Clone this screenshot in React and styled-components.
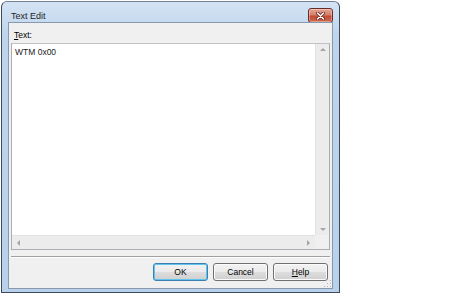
import React from "react"
import styled, { createGlobalStyle } from "styled-components"

const Global = createGlobalStyle`
  html, body {
    margin: 0;
    padding: 0;
    background: #ffffff;
  }
  body {
    font-family: "Liberation Sans", Arial, sans-serif;
    font-size: 8.5px;
    color: #000;
  }
`

const Page = styled.div`
  padding: 1px 0 0 1px;
`

const Window = styled.div`
  width: 337px;
  height: 290px;
  border: 1px solid #3b4b5c;
  border-top-color: #6f8296;
  border-radius: 6px 6px 0 0;
  background: linear-gradient(180deg, #d4e3f4 0%, #bed4ec 12%, #b9d1ea 100%);
  display: flex;
  flex-direction: column;
  box-sizing: content-box;
`

const TitleBar = styled.div`
  height: 20px;
  display: flex;
  align-items: flex-start;
  justify-content: space-between;
  padding: 0 6px 0 9px;
`

const Title = styled.span`
  font-size: 9px;
  line-height: 13px;
  margin-top: 8px;
  color: #1e1e1e;
`

const CloseButton = styled.div`
  width: 23px;
  height: 13px;
  margin-top: 6px;
  border: 1px solid #6b2a24;
  border-radius: 3px;
  background: linear-gradient(180deg, #e8a493 0%, #d47f6b 45%, #c04a35 55%, #cf6a50 100%);
  display: flex;
  align-items: center;
  justify-content: center;
  box-shadow: inset 0 0 0 1px rgba(255, 255, 255, 0.35);
`

const Client = styled.div`
  flex: 1;
  margin: 0 6px 3px 6px;
  border: 1px solid #8699ad;
  background: #f0f0f0;
  display: flex;
  flex-direction: column;
  padding: 0 2px 2px 2px;
  position: relative;
`

const Label = styled.div`
  padding: 6px 0 0 3px;
  height: 14px;
  line-height: 12px;
  u {
    text-decoration: underline;
  }
`

const TextBox = styled.div`
  height: 205px;
  border: 1px solid #abadb3;
  border-top-color: #c0c2c8;
  background: #fff;
  display: grid;
  grid-template-columns: 1fr 14px;
  grid-template-rows: 1fr 14px;
  margin-right: 0;
`

const Content = styled.div`
  padding: 2px 3px;
  line-height: 12px;
  color: #222;
`

const VScroll = styled.div`
  background: #ececec;
  border-left: 1px solid #e2e2e2;
  display: flex;
  flex-direction: column;
  justify-content: space-between;
  align-items: center;
  padding: 4px 0;
`

const HScroll = styled.div`
  background: #ececec;
  border-top: 1px solid #e2e2e2;
  display: flex;
  justify-content: space-between;
  align-items: center;
  padding: 0 5px;
`

const Corner = styled.div`
  background: #f0f0f0;
`

const Separator = styled.div`
  margin-top: 6px;
  height: 0;
  border-top: 1px solid #a0a0a0;
  border-bottom: 1px solid #ffffff;
`

const Buttons = styled.div`
  display: flex;
  justify-content: flex-end;
  gap: 5px;
  padding: 5px 2px 0 0;
`

const Button = styled.button`
  width: 55px;
  height: 18px;
  font-family: "Liberation Sans", Arial, sans-serif;
  font-size: 8.5px;
  color: #000;
  border-radius: 3px;
  border: 1px solid ${p => (p.focused ? "#3c7fb1" : "#707070")};
  background: linear-gradient(180deg, #f2f2f2 0%, #ebebeb 48%, #dddddd 52%, #cfcfcf 100%);
  box-shadow: inset 0 0 0 1px ${p => (p.focused ? "#5fc4f0" : "#fbfbfb")};
  padding: 0;
  u {
    text-decoration: underline;
  }
`

const Grip = styled.div`
  position: absolute;
  right: 1px;
  bottom: 1px;
  width: 8px;
  height: 8px;
  background-image: radial-gradient(circle, #b8b8b8 0.8px, transparent 1px);
  background-size: 3px 3px;
  clip-path: polygon(100% 0, 100% 100%, 0 100%);
`

const Arrow = ({ dir }) => {
  const pts = {
    up: "0,3 3,0 6,3",
    down: "0,0 3,3 6,0",
    left: "3,0 0,3 3,6",
    right: "0,0 3,3 0,6",
  }[dir]
  const vertical = dir === "up" || dir === "down"
  return (
    <svg width={vertical ? 6 : 3} height={vertical ? 3 : 6} viewBox={vertical ? "0 0 6 3" : "0 0 3 6"}>
      <polygon points={pts} fill="#a4a4a4" />
    </svg>
  )
}

export default function App() {
  return (
    <Page>
      <Global />
      <Window>
        <TitleBar>
          <Title>Text Edit</Title>
          <CloseButton>
            <svg width="9" height="8" viewBox="0 0 9 8">
              <path d="M1.5 1 L7.5 7 M7.5 1 L1.5 7" stroke="#5a1d15" strokeWidth="3" strokeLinecap="round" />
              <path d="M1.5 1 L7.5 7 M7.5 1 L1.5 7" stroke="#ffffff" strokeWidth="1.6" strokeLinecap="round" />
            </svg>
          </CloseButton>
        </TitleBar>
        <Client>
          <Label>
            <u>T</u>ext:
          </Label>
          <TextBox>
            <Content>WTM 0x00</Content>
            <VScroll>
              <Arrow dir="up" />
              <Arrow dir="down" />
            </VScroll>
            <HScroll>
              <Arrow dir="left" />
              <Arrow dir="right" />
            </HScroll>
            <Corner />
          </TextBox>
          <Separator />
          <Buttons>
            <Button focused>OK</Button>
            <Button>Cancel</Button>
            <Button>
              <u>H</u>elp
            </Button>
          </Buttons>
          <Grip />
        </Client>
      </Window>
    </Page>
  )
}
